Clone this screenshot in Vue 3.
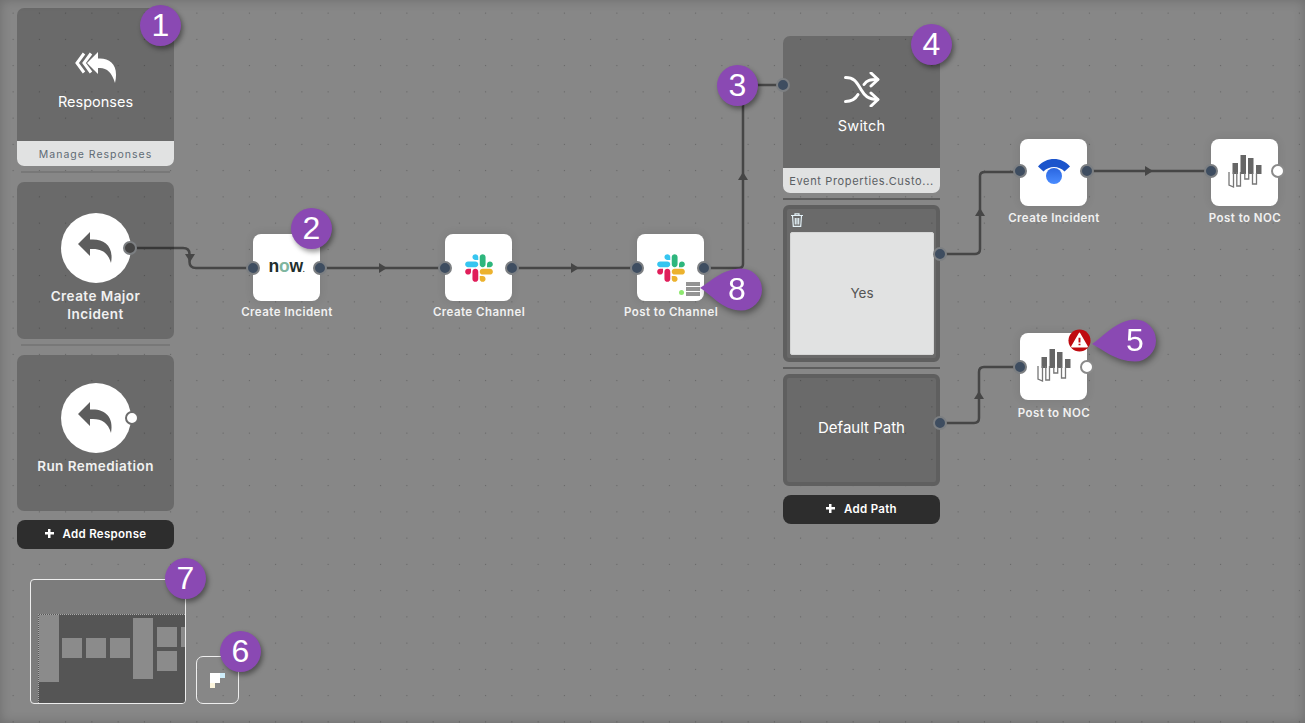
<script setup>
const nodes = [
  { x: 253, y: 234, line: 268, gap: 3, label: 'Create Incident', icon: 'now', end: 'dark' },
  { x: 445, y: 234, line: 268, gap: 3, label: 'Create Channel', icon: 'slack', end: 'dark' },
  { x: 637, y: 234, line: 268, gap: 3, label: 'Post to Channel', icon: 'slack', end: 'dark', server: true },
  { x: 1020, y: 139, line: 171, gap: 4, label: 'Create Incident', icon: 'status', end: 'dark' },
  { x: 1211, y: 139, line: 171, gap: 4, label: 'Post to NOC', icon: 'noc', end: 'open' },
  { x: 1020, y: 333, line: 367, gap: 5, label: 'Post to NOC', icon: 'noc', end: 'open', warn: true }
]
const lines = [
  'M130 248H183Q189.5 248 189.5 254V262Q189.5 268 196 268H253',
  'M320 268H445',
  'M512 268H637',
  'M704 268H739Q743 268 743 264V90Q743 85 748 85H783',
  'M940 254H975Q980 254 980 249V176Q980 172 985 172H1020',
  'M1087 171H1211',
  'M940 423H974Q979 423 979 418V372Q979 367 984 367H1020'
]
const arrows = [
  '185,254 195,254 190,262',
  '379,263 379,273 387,268',
  '571,263 571,273 579,268',
  '738,180 748,180 743,172',
  '975,216 985,216 980,208',
  '1145,166 1145,176 1153,171',
  '974,399 984,399 979,391'
]
const circles = [
  { n: 1, x: 161, y: 26 },
  { n: 2, x: 312, y: 229 },
  { n: 3, x: 738, y: 86 },
  { n: 4, x: 932, y: 45 },
  { n: 6, x: 241, y: 652 },
  { n: 7, x: 186, y: 579 }
]
const dropPath = (cx, tip) =>
  `M0 ${tip}C10 ${tip - 6} ${cx - 19} 1 ${cx} .5A21 21 0 0 1 ${cx} 42.5C${cx - 19} 42.5 10 ${tip + 5} 0 ${tip}Z`
const drops = [
  { n: 5, x: 1092, y: 319, tx: 43, d: dropPath(43, 25) },
  { n: 8, x: 700, y: 268, tx: 37, d: dropPath(41, 20) }
]
const mini = [
  [1, 35, 20, 67], [24, 58, 20, 20], [48, 58, 20, 20], [72, 58, 20, 20],
  [95, 38, 20, 61], [119, 47, 20, 20], [119, 71, 20, 20], [143, 47, 5, 20]
]
const pixels = ['w', 'w', 'b', 'w', 'w', '', 'y', '', '']
</script>

<template>
  <div class="canvas">
    <svg class="wires" width="1305" height="723" viewBox="0 0 1305 723">
      <path v-for="(d, i) in lines" :key="i" :d="d" />
      <polygon v-for="(p, i) in arrows" :key="'a' + i" :points="p" />
    </svg>

    <aside class="column left-col">
      <section class="card">
        <div class="card-body responses">
          <svg class="reply-all" viewBox="0 0 42 31" width="42" height="31">
            <path class="chev" d="M9 1.500 2 11 9 20.500M16 1.500 9 11 16 20.500" />
            <path d="M12 11 23 0V6.500H25C36 6.500 44 14 40 31 37 21 32 16 25 16H23V22Z" />
          </svg>
          <div class="card-title">Responses</div>
        </div>
        <div class="card-foot">Manage Responses</div>
      </section>
      <div class="rule"></div>
      <section class="card response">
        <div class="disc">
          <svg viewBox="0 0 36 32" width="36" height="32"><path d="M0 12 12 0V7.500H15C27 7.500 36 15 33 31 30 21 24 17 15 17H12V24Z" /></svg>
          <span class="port disc-port"></span>
        </div>
        <div class="response-label">Create Major<br />Incident</div>
      </section>
      <div class="rule"></div>
      <section class="card response last">
        <div class="disc">
          <svg viewBox="0 0 36 32" width="36" height="32"><path d="M0 12 12 0V7.500H15C27 7.500 36 15 33 31 30 21 24 17 15 17H12V24Z" /></svg>
          <span class="port open disc-port"></span>
        </div>
        <div class="response-label">Run Remediation</div>
      </section>
      <button class="add-btn"><span class="plus"></span><span>Add Response</span></button>
    </aside>

    <div
      v-for="(n, i) in nodes"
      :key="i"
      class="node"
      :style="{ left: n.x + 'px', top: n.y + 'px' }"
    >
      <div class="tile">
        <span class="port node-in" :style="{ top: n.line - n.y - 7 + 'px' }"></span>
        <span class="port node-out" :class="{ open: n.end === 'open' }" :style="{ top: n.line - n.y - 7 + 'px' }"></span>

        <div v-if="n.icon === 'now'" class="now-logo">n<i>o</i>w<small>.</small></div>

        <svg v-else-if="n.icon === 'slack'" class="slack" viewBox="0 0 127 127" width="28" height="28">
          <path fill="#E01E5A" d="M27.2 80c0 7.300-5.900 13.200-13.200 13.200C6.700 93.200.8 87.300.8 80c0-7.300 5.900-13.200 13.200-13.200h13.200V80zm6.600 0c0-7.300 5.900-13.200 13.200-13.200 7.300 0 13.200 5.900 13.200 13.200v33c0 7.300-5.900 13.200-13.200 13.200-7.300 0-13.200-5.900-13.200-13.200V80z" />
          <path fill="#36C5F0" d="M47 27c-7.300 0-13.200-5.900-13.200-13.200C33.800 6.500 39.700.6 47 .6c7.300 0 13.200 5.900 13.200 13.200V27H47zm0 6.700c7.300 0 13.200 5.900 13.200 13.200 0 7.300-5.900 13.200-13.200 13.200H13.900C6.600 60.100.7 54.200.7 46.900c0-7.300 5.900-13.200 13.200-13.200H47z" />
          <path fill="#2EB67D" d="M99.900 46.900c0-7.300 5.900-13.200 13.200-13.200 7.300 0 13.200 5.900 13.200 13.200 0 7.300-5.900 13.200-13.200 13.200H99.900V46.900zm-6.600 0c0 7.300-5.900 13.200-13.200 13.200-7.300 0-13.200-5.900-13.200-13.200V13.800C66.900 6.500 72.800.6 80.100.6c7.300 0 13.200 5.900 13.200 13.200v33.100z" />
          <path fill="#ECB22E" d="M80.100 99.800c7.300 0 13.200 5.900 13.200 13.200 0 7.300-5.900 13.200-13.200 13.200-7.300 0-13.200-5.900-13.200-13.200V99.800h13.200zm0-6.600c-7.300 0-13.200-5.900-13.200-13.200 0-7.300 5.900-13.200 13.200-13.200h33.100c7.300 0 13.200 5.900 13.200 13.200 0 7.300-5.900 13.200-13.200 13.200H80.100z" />
        </svg>

        <svg v-else-if="n.icon === 'status'" class="status" viewBox="0 0 32 26" width="32" height="26">
          <defs>
            <linearGradient id="statusDot" x1="0" y1="0" x2="0" y2="1">
              <stop offset="0" stop-color="#2a66e0" />
              <stop offset="1" stop-color="#4a8cff" />
            </linearGradient>
          </defs>
          <path fill="#1c55cc" d="M0 7.500C8 -2.500 24 -2.500 32 7.500L26.500 12.500C21 6.500 11 6.500 5.500 12.500Z" />
          <circle cx="16" cy="17" r="8" fill="url(#statusDot)" />
        </svg>

        <svg v-else class="noc" viewBox="0 0 34 34" width="34" height="34">
          <g fill="#666">
            <rect x="4.500" y="8" width="5.500" height="11" />
            <rect x="12.500" y="0" width="5.500" height="19" />
            <rect x="20" y="3" width="5.500" height="16" />
            <rect x="28" y="10" width="5.500" height="9" />
          </g>
          <g fill="none" stroke="#777" stroke-width="1.300">
            <path d="M1 17V30L5.500 32V17" />
            <path d="M8.800 17V31H12.500V17" />
            <path d="M16.800 18V24H20.700V18" />
            <path d="M24.500 18V29H28.500V18" />
          </g>
        </svg>

        <template v-if="n.server">
          <span class="led"></span>
          <span class="server"><b></b><b></b><b></b></span>
        </template>
        <svg v-if="n.warn" class="warn" viewBox="0 0 24 24" width="23" height="23">
          <circle cx="12" cy="12" r="11.500" fill="#bf0a10" />
          <path d="M12 4.500 20 18.500H4Z" fill="#fff" stroke="#fff" stroke-width="1.500" stroke-linejoin="round" />
          <path d="M12 9V14M12 15.500V17" stroke="#bf0a10" stroke-width="2" fill="none" />
        </svg>
      </div>
      <div class="node-label" :style="{ marginTop: n.gap + 'px' }">{{ n.label }}</div>
    </div>

    <div class="column switch-col">
      <section class="card">
        <span class="port switch-port"></span>
        <div class="card-body switcher">
          <svg viewBox="0 0 36 35" width="36" height="35" fill="none" stroke="#fff" stroke-width="3" stroke-linecap="round" stroke-linejoin="round">
            <path d="M1.500 5.500C11 5.500 13 11 17 17.500 20.500 23.500 24 27.500 33.500 27.500" />
            <path d="M1.500 29.500C9 29.500 12 26 14 22.500M20 12.500C23 8 26 7.500 33.500 7.500" />
            <path d="M27 1 34 7.500 27 14M27 21 34 27.500 27 34" />
          </svg>
          <div class="card-title">Switch</div>
        </div>
        <div class="card-foot switch-foot">Event Properties.Custo...</div>
      </section>
      <div class="rule wide"></div>
      <section class="path yes">
        <svg class="trash" viewBox="0 0 12 14" width="12" height="14" fill="none" stroke="#e4f2f8" stroke-width="1.200">
          <path d="M0 2.500H12M4 2.500V.8H8V2.500M1.500 2.500 2.300 13.400H9.700L10.500 2.500M4.300 5V11.500M6 5V11.500M7.700 5V11.500" />
        </svg>
        <div class="yes-box">Yes</div>
        <span class="port path-port"></span>
      </section>
      <div class="rule wide"></div>
      <section class="path default">
        Default Path
        <span class="port path-port"></span>
      </section>
      <button class="add-btn path-btn"><span class="plus"></span><span>Add Path</span></button>
    </div>

    <div class="minimap">
      <div class="mini-view"></div>
      <span
        v-for="(m, i) in mini"
        :key="i"
        class="mini-block"
        :style="{ left: m[0] + 7 + 'px', top: m[1] + 'px', width: m[2] + 'px', height: m[3] + 'px' }"
      ></span>
    </div>
    <button class="map-toggle">
      <span class="pixels">
        <i v-for="(p, i) in pixels" :key="i" :class="p"></i>
      </span>
    </button>

    <div
      v-for="c in circles"
      :key="'c' + c.n"
      class="badge"
      :style="{ left: c.x - 21 + 'px', top: c.y - 21 + 'px' }"
    >{{ c.n }}</div>

    <div
      v-for="d in drops"
      :key="'d' + d.n"
      class="drop"
      :style="{ left: d.x + 'px', top: d.y + 'px' }"
    >
      <svg viewBox="0 0 65 43" width="65" height="43">
        <path fill="#8a49b3" :d="d.d" />
      </svg>
      <span :style="{ left: d.tx + 'px' }">{{ d.n }}</span>
    </div>
  </div>
</template>

<style>
html, body { margin: 0; background: #878787; }
</style>

<style scoped>
.canvas {
  position: relative;
  width: 1305px;
  height: 723px;
  overflow: hidden;
  background-color: #878787;
  background-image: radial-gradient(circle, #626262 0.4px, transparent 1px);
  background-size: 26.25px 26.25px;
  font-family: Inter, "Liberation Sans", sans-serif;
}
.canvas::after {
  content: "";
  position: absolute;
  inset: 0;
  pointer-events: none;
  box-shadow: inset 0 0 12px rgba(0, 0, 0, 0.2);
}
.wires { position: absolute; left: 0; top: 0; }
.wires path { fill: none; stroke: #464646; stroke-width: 2.5; }
.wires polygon { fill: #464646; }

.column { position: absolute; display: flex; flex-direction: column; width: 157px; }
.left-col { left: 17px; top: 8px; }
.switch-col { left: 783px; top: 36px; }

.card {
  position: relative;
  height: 157px;
  box-sizing: border-box;
  display: flex;
  flex-direction: column;
  background: rgba(0, 0, 0, 0.21);
  border-radius: 7px;
}
.left-col > .card:first-child { height: 158px; }
.card-body { flex: 1; display: flex; flex-direction: column; align-items: center; }
.responses { padding-top: 44px; }
.switcher { padding-top: 36px; }
.reply-all { fill: #fff; }
.reply-all .chev { fill: none; stroke: #fff; stroke-width: 3; }
.card-title { color: #fff; font-size: 14.500px; font-weight: 400; line-height: 18px; margin-top: 10px; }
.switcher .card-title { margin-top: 10px; letter-spacing: 0.2px; }
.card-foot {
  height: 25px;
  line-height: 27px;
  text-align: center;
  background: #e1e2e2;
  color: #5f6b75;
  font-size: 10.500px;
  letter-spacing: 1px;
  border-radius: 0 0 7px 7px;
}
.switch-foot { white-space: nowrap; font-size: 11px; letter-spacing: 0.65px; color: #5b6064; }
.rule { height: 2px; margin: 5px 4px 9px; background: #787878; }
.rule.wide { margin: 5px 0 5px; background: #5e5e5e; }

.response { align-items: center; padding-top: 31px; }
.response.last { height: 156px; padding-top: 28px; }
.disc {
  position: relative;
  width: 70px;
  height: 70px;
  border-radius: 50%;
  background: #fff;
  display: flex;
  align-items: center;
  justify-content: center;
}
.disc svg { fill: #5d5d5d; margin-left: 1px; }
.response-label {
  margin-top: 4px;
  color: #f1f1f1;
  font-size: 13.500px;
  font-weight: 600;
  line-height: 18px;
  letter-spacing: 0.45px;
  text-align: center;
  white-space: nowrap;
}

.add-btn {
  display: flex;
  align-items: center;
  justify-content: center;
  gap: 9px;
  height: 29px;
  margin-top: 9px;
  padding: 0 0 2px;
  border: 0;
  border-radius: 8px;
  background: #2d2d2d;
  color: #fff;
  font-family: inherit;
  font-size: 11.500px;
  font-weight: 600;
  letter-spacing: 0.3px;
}
.plus {
  position: relative;
  width: 9px;
  height: 9px;
  background:
    linear-gradient(#fff, #fff) center / 100% 2.500px no-repeat,
    linear-gradient(#fff, #fff) center / 2.500px 100% no-repeat;
}

.port {
  position: absolute;
  width: 14px;
  height: 14px;
  box-sizing: border-box;
  border-radius: 50%;
  background: #3e4d60;
  border: 2.500px solid #7c7f82;
}
.port.open { background: #fff; border-color: #8a8a8a; }
.disc-port { right: -6px; top: 28px; background: #444; }
.disc-port.open { right: -8px; background: #fff; border-color: #6b6b6b; }
.switch-port { left: -7px; top: 42px; }

.node { position: absolute; width: 67px; }
.tile {
  position: relative;
  width: 67px;
  height: 67px;
  border-radius: 8px;
  background: #fff;
  display: flex;
  align-items: center;
  justify-content: center;
  box-shadow: 0 0 10px rgba(0, 0, 0, 0.1);
}
.node-in { left: -7px; }
.node-out { right: -7px; }
.node-label {
  width: 140px;
  margin-left: -36px;
  line-height: 16px;
  text-align: center;
  color: #f1f1f1;
  font-size: 11.500px;
  font-weight: 600;
  letter-spacing: 0.45px;
}
.now-logo {
  font-family: "Liberation Sans", sans-serif;
  font-weight: 700;
  font-size: 17.500px;
  letter-spacing: -0.2px;
  color: #1f2f2d;
  line-height: 1;
  margin-top: -2px;
}
.now-logo i { font-style: normal; color: #7fb6a0; }
.now-logo small { font-size: 7px; }
.status { margin-top: -1px; }
.noc { margin-top: -1px; margin-left: 1px; }
.led {
  position: absolute;
  left: 42px;
  top: 56px;
  width: 5px;
  height: 5px;
  border-radius: 50%;
  background: #8ee86f;
}
.server {
  position: absolute;
  left: 49px;
  top: 48px;
  width: 14px;
  display: flex;
  flex-direction: column;
  gap: 1px;
}
.server b { display: block; height: 4px; background: #949494; }
.warn { position: absolute; right: -4px; top: -4px; }

.path {
  position: relative;
  box-sizing: border-box;
  border: 4px solid #5f5f5f;
  border-radius: 6px;
  background: rgba(0, 0, 0, 0.21);
}
.yes { height: 157px; padding: 23px 2px 3px 3px; display: flex; }
.trash { position: absolute; left: 4px; top: 4px; }
.yes-box {
  flex: 1;
  display: flex;
  align-items: center;
  justify-content: center;
  background: #e1e2e2;
  border: 1px solid #d4d5d5;
  border-radius: 2px;
  color: #555;
  font-size: 13.500px;
  padding-bottom: 2px;
}
.default {
  height: 112px;
  display: flex;
  align-items: center;
  justify-content: center;
  color: #fff;
  font-size: 15px;
  padding-bottom: 6px;
}
.path-port { right: -11px; top: 38px; }
.path-btn { margin-top: 9px; }

.minimap {
  position: absolute;
  left: 30px;
  top: 579px;
  width: 156px;
  height: 125px;
  box-sizing: border-box;
  border: 1px solid #eee;
  border-radius: 4px;
  background: #7c7c7c;
  overflow: hidden;
}
.mini-view {
  position: absolute;
  left: 7px;
  top: 34px;
  right: 0;
  bottom: 0;
  background: #555;
  border-top: 1px dotted #aaa;
  border-left: 1px dotted #aaa;
}
.mini-block { position: absolute; background: #8b8b8b; }
.map-toggle {
  position: absolute;
  left: 196px;
  top: 656px;
  width: 43px;
  height: 48px;
  padding: 0;
  border: 1px solid #eee;
  border-radius: 7px;
  background: transparent;
}
.pixels {
  position: absolute;
  left: 13px;
  top: 16px;
  display: grid;
  grid-template-columns: repeat(3, 4.5px);
  grid-auto-rows: 4.5px;
  gap: 0.5px;
}
.pixels .w { background: #fff; }
.pixels .b { background: #cfeefb; }
.pixels .y { background: #fdf6de; }

.badge, .drop span {
  color: #fff;
  font-family: "Liberation Sans", sans-serif;
  font-size: 32px;
  text-align: center;
}
.badge {
  position: absolute;
  width: 41px;
  height: 41px;
  line-height: 41px;
  border-radius: 50%;
  background: #8a49b3;
  box-shadow: 2px 3px 5px rgba(0, 0, 0, 0.4);
}
.drop { position: absolute; width: 65px; height: 43px; filter: drop-shadow(2px 3px 3px rgba(0, 0, 0, 0.4)); }
.drop svg { display: block; }
.drop span { position: absolute; top: 0; line-height: 43px; width: 0; display: flex; justify-content: center; }
</style>
